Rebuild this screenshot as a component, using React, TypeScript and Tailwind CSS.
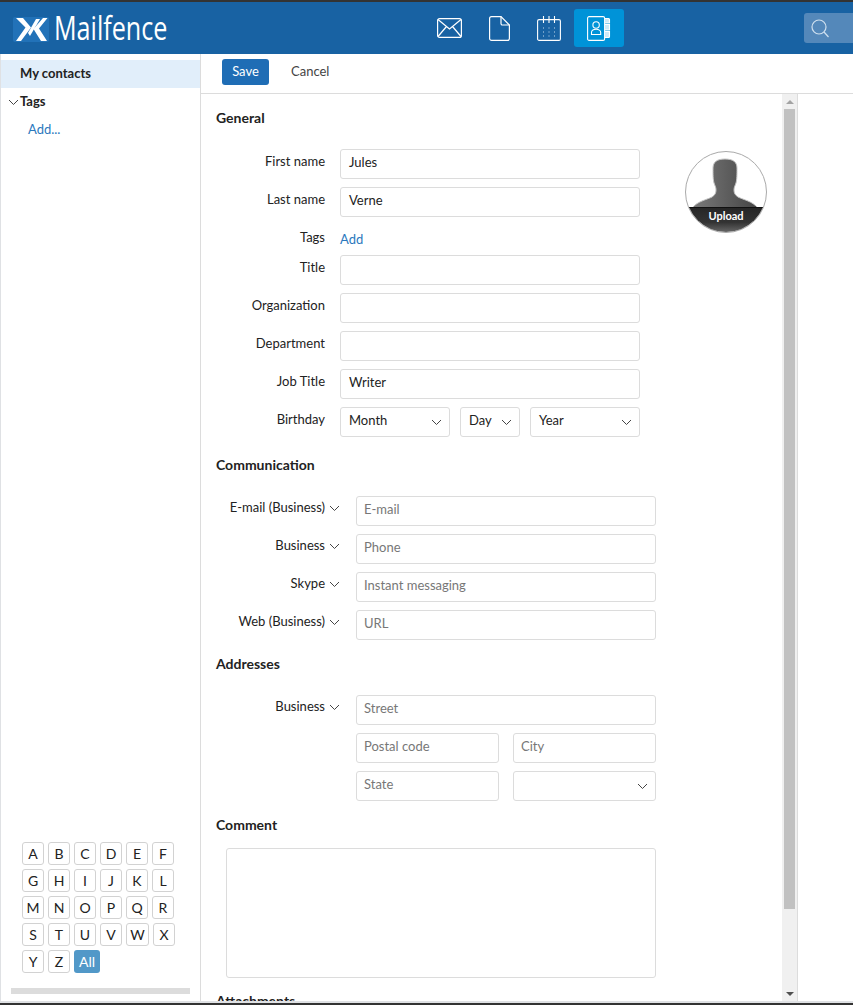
import React from "react";

const Chevron = ({ className = "" }: { className?: string }) => (
  <svg width="11" height="7" viewBox="0 0 11 7" className={className} fill="none" stroke="#444" strokeWidth="1">
    <path d="M1 1l4.5 4.5L10 1" />
  </svg>
);

const Field = ({ value = "", placeholder = "", className = "w-[300px]" }: { value?: string; placeholder?: string; className?: string }) => (
  <div className={`h-[30px] border border-[#dcdcdc] rounded-[3px] flex items-center pb-[3px] text-[13px] ${value ? "pl-2 text-[#222]" : "pl-[7px] text-[#777]"} ${className}`}>
    {value || placeholder}
  </div>
);

const SelectBox = ({ label = "", className = "" }: { label?: string; className?: string }) => (
  <div className={`h-[30px] border border-[#dcdcdc] rounded-[3px] flex items-center justify-between pl-2 pr-[7px] text-[13px] text-[#222] ${className}`}>
    <span className="mt-[-3px]">{label}</span>
    <Chevron />
  </div>
);

const Row = ({ label, children, className = "mb-2" }: { label: string; children: React.ReactNode; className?: string }) => (
  <div className={`flex items-start ${className}`}>
    <div className="w-[109px] mr-[15px] text-right text-[13px] leading-[20px] pt-[2px] text-[#222] whitespace-nowrap">{label}</div>
    {children}
  </div>
);

const CommRow = ({ label, children, className = "mb-2" }: { label: string; children: React.ReactNode; className?: string }) => (
  <div className={`flex items-start ${className}`}>
    <div className="w-[125px] mr-[15px] pr-[1px] flex justify-end items-center text-[13px] leading-[20px] pt-[1px] text-[#222] whitespace-nowrap">
      <span>{label}</span>
      <Chevron className="ml-[4px] mt-[3px]" />
    </div>
    {children}
  </div>
);

const Heading = ({ children, className = "" }: { children: React.ReactNode; className?: string }) => (
  <div className={`text-[14px] leading-[20px] font-bold text-[#222] ${className}`}>{children}</div>
);

const letters = "ABCDEFGHIJKLMNOPQRSTUVWXYZ".split("");

export default function App() {
  return (
    <div className="w-[853px] h-[1005px] bg-white overflow-hidden flex flex-col" style={{ fontFamily: "Lato, sans-serif" }}>
      <div className="h-[2px] bg-[#333]" />
      <header className="h-[52px] bg-[#1862a3] flex items-center relative shrink-0">
        <div className="flex items-center ml-[13px] mt-[3px]">
          <svg width="36" height="25" viewBox="0 0 36 25">
            <rect width="36" height="25" rx="2" fill="#2272b8" />
            <path d="M3 1h7l8 9.5L8 24H3l9.500-13.500z" fill="#fff" />
            <path d="M23 2h4L17 19l-2-3z" fill="#fff" />
            <path d="M30 1h4.500L26 11.500 34 24h-6l-7.500-12z" fill="#fff" />
          </svg>
          <span className="text-white text-[32px] leading-[32px] ml-[5px] mt-[-3px]" style={{ fontFamily: "'Open Sans', sans-serif", fontWeight: 400, transform: "scaleX(0.785)", transformOrigin: "left" }}>Mailfence</span>
        </div>
        <div className="absolute left-[424px] top-[7px] flex items-center">
          <div className="w-[50px] h-[38px] flex items-center justify-center">
            <svg width="25" height="20" viewBox="0 0 25 20" fill="none" stroke="#fff" strokeWidth="1.2">
              <rect x="0.600" y="0.600" width="23.800" height="18.800" rx="2" />
              <path d="M1 1.500L12.500 11 24 1.500M1 18.500l8.500-10M24 18.500l-8.500-10" />
            </svg>
          </div>
          <div className="w-[50px] h-[38px] flex items-center justify-center">
            <svg width="21" height="25" viewBox="0 0 21 25" fill="none" stroke="#fff" strokeWidth="1.2">
              <path d="M2.500 0.600h9.500l8.400 8.400V22.400a2 2 0 0 1-2 2H2.600a2 2 0 0 1-2-2V2.500A1.900 1.900 0 0 1 2.500 0.600z" />
              <path d="M12 0.600v7a1.400 1.400 0 0 0 1.400 1.400h7" />
            </svg>
          </div>
          <div className="w-[50px] h-[38px] flex items-center justify-center">
            <svg width="24" height="25" viewBox="0 0 24 25" fill="none" stroke="#fff" strokeWidth="1.1">
              <rect x="0.600" y="3.600" width="22.800" height="20.800" rx="1.500" />
              <path d="M6.500 0v7M12 0v7M17.500 0v7" />
              <path d="M6 12h1M11.500 12h1M17 12h1M6 16h1M11.500 16h1M17 16h1M6 20h1M11.500 20h1M17 20h1" stroke="#c8dcee" />
            </svg>
          </div>
          <div className="w-[50px] h-[38px] bg-[#0093d8] rounded-[3px] flex items-center justify-center">
            <svg width="24" height="25" viewBox="0 0 24 25" fill="none" stroke="#fff" strokeWidth="1.1">
              <rect x="0.600" y="0.600" width="17" height="23.800" rx="1.500" />
              <path d="M18 2.500h3.500a1 1 0 0 1 1 1v3.500H18M18 8.500h4.500v5.500H18M18 15.500h4.500v5a1 1 0 0 1-1 1H18" fill="#cfeaf8" />
              <circle cx="9.100" cy="9" r="3.200" />
              <path d="M4.500 18.500v-2c0-2 2-3.300 4.600-3.300s4.600 1.300 4.600 3.300v2z" />
            </svg>
          </div>
        </div>
        <div className="absolute left-[804px] top-[11px] w-[49px] h-[30px] bg-[#5488ba] rounded-l-[3px] flex items-center pl-[7px]">
          <svg width="18" height="19" viewBox="0 0 18 19" fill="none" stroke="#cfe0ef" strokeWidth="1.2">
            <circle cx="8" cy="8" r="7" />
            <path d="M13 13l4.500 5" />
          </svg>
        </div>
      </header>

      <div className="flex flex-1 min-h-0 border-l border-[#dfe1e4]">
        <aside className="w-[200px] border-r border-[#dcdcdc] flex flex-col shrink-0">
          <div className="mt-[6px] h-[28px] bg-[#e1eefa] flex items-center pl-[19px] pb-[1px] text-[13px] font-bold text-[#222]">My contacts</div>
          <div className="h-[28px] flex items-center pl-[7px] pb-[1px] text-[13px] font-bold text-[#222]">
            <Chevron className="mr-[1px] mt-[1px]" />
            <span>Tags</span>
          </div>
          <div className="h-[28px] flex items-center pl-[27px] pb-[1px] text-[13px] text-[#2a78bd]">Add...</div>
          <div className="mt-auto pl-[21px] pb-[1px]">
            <div className="flex flex-wrap w-[170px] gap-x-[4px] gap-y-[4px]">
              {letters.map((l) => (
                <div key={l} className={`h-[23px] border border-[#d2d2d2] rounded-[3px] flex items-center justify-center text-[14px] text-[#222] ${l === "W" ? "w-[23px]" : "w-[22px]"}`}>{l}</div>
              ))}
              <div className="h-[23px] w-[26px] rounded-[3px] bg-[#5198c8] text-white text-[14px] flex items-center justify-center">All</div>
            </div>
            <div className="mt-[15px] ml-[-11px] w-[179px] h-[6px] bg-[#dcdcdc]" />
            <div className="h-[6px]" />
          </div>
        </aside>

        <main className="flex-1 min-w-0 flex flex-col">
          <div className="h-[40px] border-b border-[#dcdcdc] flex items-center shrink-0 pl-[21px]">
            <div className="w-[47px] h-[26px] bg-[#1f6db5] rounded-[3px] text-white text-[13px] flex items-center justify-center mt-[-3px]">Save</div>
            <div className="ml-[22px] text-[13px] text-[#444] mt-[-3px]">Cancel</div>
          </div>
          <div className="flex flex-1 min-h-0">
            <div className="w-[581px] shrink-0 overflow-hidden relative pl-[15px] pt-[14px]">
              <div className="absolute left-[484px] top-[57px] w-[82px] h-[82px] rounded-full border border-[#aaa] overflow-hidden bg-white">
                <svg width="80" height="80" viewBox="0 0 80 80" className="absolute left-0 top-0">
                  <defs>
                    <linearGradient id="head" x1="0" x2="1" y1="0" y2="0">
                      <stop offset="0" stopColor="#7a7a7a" />
                      <stop offset="1" stopColor="#454545" />
                    </linearGradient>
                    <linearGradient id="band" x1="0" x2="0" y1="0" y2="1">
                      <stop offset="0" stopColor="#262626" />
                      <stop offset="0.600" stopColor="#333" />
                      <stop offset="1" stopColor="#666" />
                    </linearGradient>
                  </defs>
                  <path d="M39 7c-8 0-12 3-12 9 0 7 0 11 1 15 1 3 2 4 2 7 0 3-1 5-4 7-6 3-14 4-20 11h66c-6-7-14-8-20-11-3-2-4-4-4-7 0-3 1-4 2-7 1-4 1-8 1-15 0-6-4-9-12-9z" fill="url(#head)" stroke="#c4c4c4" strokeWidth="1" />
                  <rect x="0" y="56" width="80" height="24" fill="url(#band)" />
                  <rect x="0" y="55" width="80" height="1" fill="#111" />
                </svg>
                <div className="absolute left-0 right-0 top-[57px] text-center text-[11px] leading-[14px] font-bold text-white">Upload</div>
              </div>

              <Heading>General</Heading>
              <div className="mt-[21px]">
                <Row label="First name"><Field value="Jules" /></Row>
                <Row label="Last name"><Field value="Verne" /></Row>
                <div className="flex items-start h-[30px]">
                  <div className="w-[109px] mr-[15px] text-right text-[13px] leading-[20px] pt-[2px] text-[#222]">Tags</div>
                  <div className="text-[13px] leading-[20px] pt-[4px] text-[#2a78bd]">Add</div>
                </div>
                <Row label="Title"><Field /></Row>
                <Row label="Organization"><Field /></Row>
                <Row label="Department"><Field /></Row>
                <Row label="Job Title"><Field value="Writer" /></Row>
                <Row label="Birthday" className="mb-0">
                  <div className="flex w-[300px] gap-[10px]">
                    <SelectBox label="Month" className="w-[110px]" />
                    <SelectBox label="Day" className="w-[60px]" />
                    <SelectBox label="Year" className="w-[110px]" />
                  </div>
                </Row>
              </div>

              <Heading className="mt-[18px]">Communication</Heading>
              <div className="mt-[21px]">
                <CommRow label="E-mail (Business)"><Field placeholder="E-mail" /></CommRow>
                <CommRow label="Business"><Field placeholder="Phone" /></CommRow>
                <CommRow label="Skype"><Field placeholder="Instant messaging" /></CommRow>
                <CommRow label="Web (Business)" className="mb-0"><Field placeholder="URL" /></CommRow>
              </div>

              <Heading className="mt-[14px]">Addresses</Heading>
              <div className="mt-[21px]">
                <CommRow label="Business"><Field placeholder="Street" /></CommRow>
                <div className="ml-[140px] w-[300px] grid grid-cols-2 gap-x-[14px] gap-y-2">
                  <Field placeholder="Postal code" className="w-full" />
                  <Field placeholder="City" className="w-full" />
                  <Field placeholder="State" className="w-full" />
                  <SelectBox className="w-full" />
                </div>
              </div>

              <Heading className="mt-[14px]">Comment</Heading>
              <div className="mt-[13px] ml-[10px] w-[430px] h-[130px] border border-[#dcdcdc] rounded-[3px]" />
              <Heading className="mt-[13px]">Attachments</Heading>
            </div>
            <div className="w-[15px] bg-[#f0f0f0] border-r border-[#dcdcdc] flex flex-col items-center shrink-0 box-content">
              <div className="h-[15px] flex items-center justify-center">
                <div className="w-0 h-0 border-l-[4px] border-r-[4px] border-b-[4px] border-transparent border-b-[#a3a3a3]" />
              </div>
              <div className="w-[11px] h-[800px] bg-[#c1c1c1]" />
              <div className="mt-auto h-[15px] flex items-center justify-center">
                <div className="w-0 h-0 border-l-[4px] border-r-[4px] border-t-[4px] border-transparent border-t-[#505050]" />
              </div>
            </div>
          </div>
        </main>
      </div>
      <div className="h-[2px] bg-[#dfe1e4] shrink-0" />
      <div className="h-[2px] bg-[#333] shrink-0" />
    </div>
  );
}
